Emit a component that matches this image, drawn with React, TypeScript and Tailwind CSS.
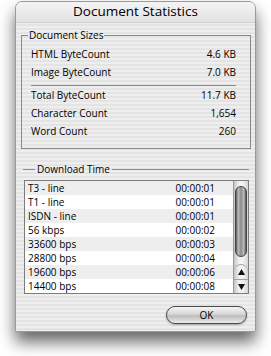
import React from "react";

const sizes = [
  ["HTML ByteCount", "4.6 KB"],
  ["Image ByteCount", "7.0 KB"],
];
const sizes2 = [
  ["Total ByteCount", "11.7 KB"],
  ["Character Count", "1,654"],
  ["Word Count", "260"],
];
const times = [
  ["T3 - line", "00:00:01"],
  ["T1 - line", "00:00:01"],
  ["ISDN - line", "00:00:01"],
  ["56 kbps", "00:00:02"],
  ["33600 bps", "00:00:03"],
  ["28800 bps", "00:00:04"],
  ["19600 bps", "00:00:06"],
  ["14400 bps", "00:00:08"],
];

function Row({ a, b }: { a: string; b: string }) {
  return (
    <div className="flex h-[18px] items-center justify-between pl-[9px] pr-[14px]">
      <span>{a}</span>
      <span>{b}</span>
    </div>
  );
}

export default function App() {
  return (
    <div
      className="h-[356px] w-[271px] bg-white pt-px text-black"
      style={{ fontFamily: '"Open Sans", "Liberation Sans", sans-serif' }}
    >
      <div className="ml-[15px] flex h-[331px] w-[241px] flex-col overflow-hidden rounded-t-[7px] border border-[#9a9a9a] bg-[repeating-linear-gradient(180deg,#eeeeee_0px,#eeeeee_2px,#e4e4e4_2px,#e4e4e4_4px)] shadow-[0_10px_16px_rgba(0,0,0,0.6)]">
        {/* title bar */}
        <div className="flex h-[21px] items-center justify-center border-b border-[#cfcfcf] bg-[linear-gradient(180deg,#f4f4f4,#e2e2e2)] text-[13.5px] font-medium leading-none">
          Document Statistics
        </div>

        {/* Document Sizes */}
        <div className="ml-[5px] mt-[5px] w-[230px] text-[10px] font-medium">
          <div className="flex h-[14px]">
            <div className="h-[7px] w-[7px] self-end border-l border-t border-[#8a8a8a]" />
            <span className="px-[1px] leading-[14px]">Document Sizes</span>
            <div className="h-[7px] flex-1 self-end border-r border-t border-[#8a8a8a]" />
          </div>
          <div className="border-x border-b border-[#8a8a8a] pb-[8px] pt-[3px]">
            {sizes.map(([a, b]) => (
              <Row key={a} a={a} b={b} />
            ))}
            <div className="ml-[9px] mr-[14px] mt-[4px] h-px bg-[#8a8a8a]" />
            {sizes2.map(([a, b]) => (
              <Row key={a} a={a} b={b} />
            ))}
          </div>
        </div>

        {/* Download Time */}
        <div className="ml-[7px] mt-[13px] w-[226px] text-[10px] font-medium">
          <div className="flex h-[14px] items-center">
            <div className="h-px w-[12px] bg-[#8a8a8a]" />
            <span className="px-[2px] leading-[14px]">Download Time</span>
            <div className="h-px flex-1 bg-[#8a8a8a]" />
          </div>
          <div className="ml-px mt-[4px] flex border border-[#7c7c7c] bg-white">
            <div className="flex-1">
              {times.map(([a, b], i) => (
                <div
                  key={a}
                  className={`flex h-[14px] items-center justify-between pl-[3px] pr-[18px] ${
                    i % 2 === 0 ? "bg-[#eeeeee]" : "bg-white"
                  }`}
                >
                  <span>{a}</span>
                  <span>{b}</span>
                </div>
              ))}
            </div>
            {/* scrollbar */}
            <div className="flex w-[15px] flex-col border-l border-[#9a9a9a] bg-[linear-gradient(90deg,#c4c4c4,#f2f2f2_35%,#f2f2f2_65%,#d4d4d4)]">
              <div className="h-[5px]" />
              <div className="mx-px h-[71px] rounded-full border border-[#444] bg-[linear-gradient(90deg,#555_0%,#bdbdbd_22%,#8a8a8a_50%,#bdbdbd_78%,#555_100%)]" />
              <div className="flex-1" />
              <div className="flex h-[15px] items-center justify-center rounded-t-[7px] border-t border-[#a0a0a0]">
                <svg width="7" height="6" viewBox="0 0 7 6">
                  <path d="M3.5 0L7 6H0z" fill="#111" />
                </svg>
              </div>
              <div className="flex h-[14px] items-center justify-center border-t border-[#a0a0a0]">
                <svg width="7" height="6" viewBox="0 0 7 6">
                  <path d="M0 0H7L3.5 6z" fill="#111" />
                </svg>
              </div>
            </div>
          </div>
        </div>

        {/* OK */}
        <div className="mr-[8px] mt-[12px] flex justify-end">
          <div className="flex h-[18px] w-[81px] items-center justify-center rounded-full border border-[#4a4a4a] bg-[linear-gradient(180deg,#f6f6f6_0%,#d6d6d6_45%,#bdbdbd_55%,#eaeaea_100%)] text-[10px] font-medium shadow-[0_1px_2px_rgba(0,0,0,0.3)]">
            OK
          </div>
        </div>
      </div>
    </div>
  );
}
